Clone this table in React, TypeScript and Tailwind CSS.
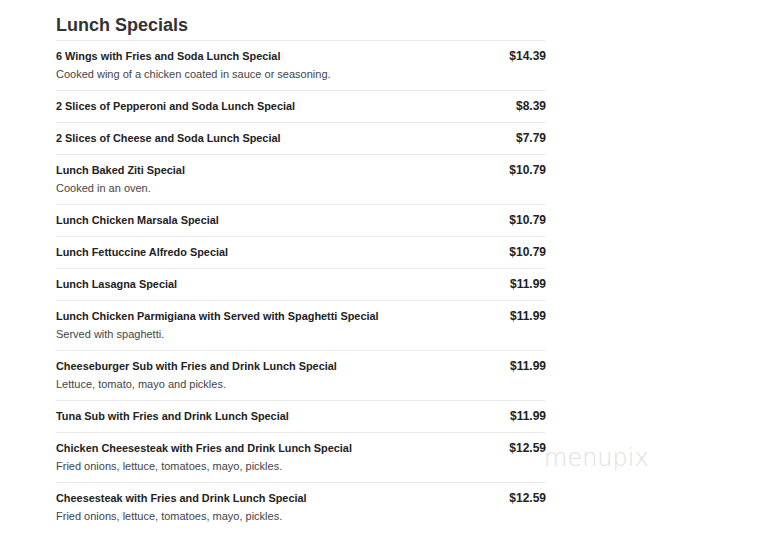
import React from 'react';

const items = [
  { name: '6 Wings with Fries and Soda Lunch Special', desc: 'Cooked wing of a chicken coated in sauce or seasoning.', price: '$14.39' },
  { name: '2 Slices of Pepperoni and Soda Lunch Special', price: '$8.39' },
  { name: '2 Slices of Cheese and Soda Lunch Special', price: '$7.79' },
  { name: 'Lunch Baked Ziti Special', desc: 'Cooked in an oven.', price: '$10.79' },
  { name: 'Lunch Chicken Marsala Special', price: '$10.79' },
  { name: 'Lunch Fettuccine Alfredo Special', price: '$10.79' },
  { name: 'Lunch Lasagna Special', price: '$11.99' },
  { name: 'Lunch Chicken Parmigiana with Served with Spaghetti Special', desc: 'Served with spaghetti.', price: '$11.99' },
  { name: 'Cheeseburger Sub with Fries and Drink Lunch Special', desc: 'Lettuce, tomato, mayo and pickles.', price: '$11.99' },
  { name: 'Tuna Sub with Fries and Drink Lunch Special', price: '$11.99' },
  { name: 'Chicken Cheesesteak with Fries and Drink Lunch Special', desc: 'Fried onions, lettuce, tomatoes, mayo, pickles.', price: '$12.59' },
  { name: 'Cheesesteak with Fries and Drink Lunch Special', desc: 'Fried onions, lettuce, tomatoes, mayo, pickles.', price: '$12.59' },
];

export default function App() {
  return (
    <div className="relative w-[777px] h-[541px] bg-white overflow-hidden font-['Liberation_Sans',Arial,sans-serif] text-[#333]">
      <div className="w-[490px] ml-[56px] pt-[14px]">
        <h2 className="text-[18px] font-bold leading-[22px] pb-[4px] text-[#333]">Lunch Specials</h2>
        {items.map((it, i) => (
          <div key={i} className="flex justify-between border-t border-[#ececec] pt-[8px] pb-[9px]">
            <div>
              <div className="text-[10.9px] font-bold leading-[14px] text-[#222]">{it.name}</div>
              {it.desc && <div className="text-[11px] leading-[14px] mt-[4px] text-[#444]">{it.desc}</div>}
            </div>
            <div className="text-[12px] font-bold leading-[14px] text-[#222]">{it.price}</div>
          </div>
        ))}
      </div>
      <div className="absolute left-[544px] top-[443px] text-[24px] leading-[30px] font-['DejaVu_Sans',sans-serif] font-extralight text-[#e0e0e0]">
        menupix
      </div>
    </div>
  );
}
